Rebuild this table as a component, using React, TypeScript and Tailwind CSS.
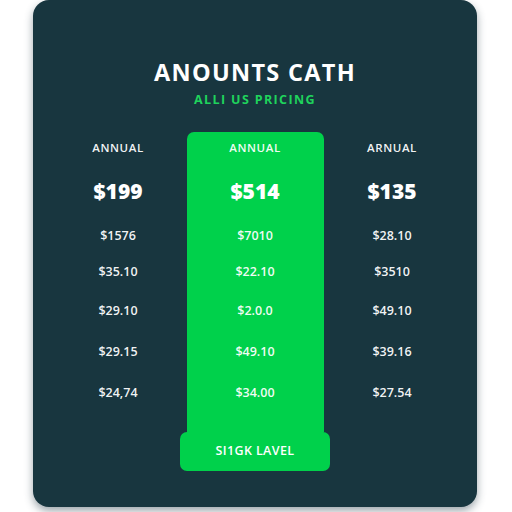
import React from 'react'

const columns = [
  { label: 'ANNUAL', price: '$199', rows: ['$1576', '$35.10', '$29.10', '$29.15', '$24,74'] },
  { label: 'ANNUAL', price: '$514', rows: ['$7010', '$22.10', '$2.0.0', '$49.10', '$34.00'], featured: true },
  { label: 'ARNUAL', price: '$135', rows: ['$28.10', '$3510', '$49.10', '$39.16', '$27.54'] },
]

// row heights tuned so each price sits where the reference has it
const rowHeights = ['h-[32px]', 'h-[41px]', 'h-[37px]', 'h-[45px]', 'h-[37px]']

function PriceColumn({ label, price, rows, featured }: { label: string; price: string; rows: string[]; featured?: boolean }) {
  return (
    <div className={`flex flex-col items-center ${featured ? 'bg-[#00d14b] rounded-t-[7px]' : ''}`}>
      <div className="h-[31px] flex items-center text-[11.5px] font-semibold tracking-[0.05em] text-white/95">
        {label}
      </div>
      <div className="h-[57px] flex items-center text-[21px] font-extrabold text-white">{price}</div>
      {rows.map((r, i) => (
        <div key={i} className={`${rowHeights[i]} flex items-center text-[12.5px] font-semibold text-white/95`}>
          {r}
        </div>
      ))}
      <div className="h-[20px]" />
    </div>
  )
}

export default function App() {
  return (
    <div className="w-[512px] h-[512px] bg-white overflow-hidden" style={{ fontFamily: '"Open Sans", "Liberation Sans", sans-serif' }}>
      <div className="ml-[33px] w-[444px] h-[507px] rounded-[16px] bg-[#18363f] shadow-[0_4px_8px_rgba(40,60,70,0.45)] flex flex-col items-center">
        <h1 className="mt-[58px] text-[23.5px] leading-[28px] font-bold tracking-[0.055em] text-white">
          ANOUNTS CATH
        </h1>
        <p className="mt-[6px] text-[12.5px] leading-[16px] font-bold tracking-[0.11em] text-[#1fd35c]">
          ALLI US PRICING
        </p>
        <div className="mt-[24px] grid grid-cols-[137px_137px_137px]">
          {columns.map((c, i) => (
            <PriceColumn key={i} {...c} />
          ))}
        </div>
        <button className="w-[150px] h-[39px] rounded-[7px] bg-[#00d14b] text-[12.5px] font-semibold tracking-[0.03em] text-white">
          SI1GK LAVEL
        </button>
      </div>
    </div>
  )
}
